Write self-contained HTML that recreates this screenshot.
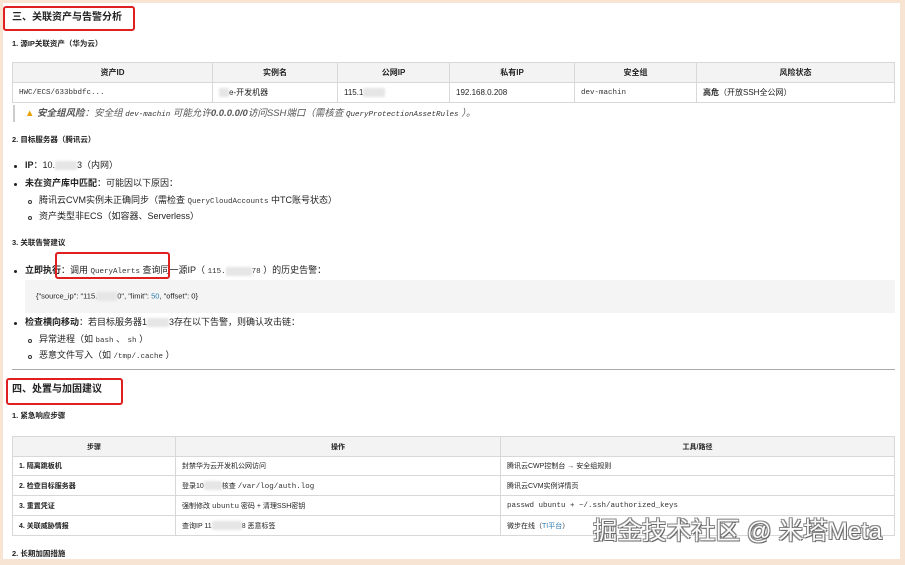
<!DOCTYPE html>
<html><head><meta charset="utf-8"><style>
*{margin:0;padding:0;box-sizing:border-box}
html,body{width:905px;height:565px;overflow:hidden;background:#f8e4d2}
#pg{position:absolute;left:3px;top:3px;width:897px;height:556px;background:#fff;font-family:"Liberation Sans","Noto Sans CJK SC",sans-serif;color:#222;font-size:9px}
.a{position:absolute;white-space:nowrap;line-height:1}
.b{font-weight:bold}
.m{font-family:"Liberation Mono","Noto Sans CJK SC",monospace;font-size:7.5px;color:#333}
.rb{position:absolute;border:2px solid #e02020;border-radius:3px}
table{position:absolute;border-collapse:collapse;font-size:8px}
td,th{border:1px solid #d8d8d8;padding:0 6px;text-align:left;font-weight:normal;white-space:nowrap}
th{background:#f3f3f3;font-weight:bold;text-align:center}
.blur{display:inline-block;background:#e6e6e6;height:9px;vertical-align:middle;filter:blur(1px)}
.dot{position:absolute;width:3px;height:3px;border-radius:50%;background:#222}
.cir{position:absolute;width:4px;height:4px;border-radius:50%;border:1px solid #333}
</style></head><body><div id="pg">
<div class="rb" style="left:0;top:3px;width:132px;height:25px"></div>
<div class="a b" style="left:9px;top:10px;font-size:10px">三、关联资产与告警分析</div>
<div class="a b" style="left:9px;top:37px;font-size:7.5px">1. 源IP关联资产（华为云）</div>
<table style="left:9px;top:59px;width:883px">
<tr style="height:20px"><th style="width:200px">资产ID</th><th style="width:125px">实例名</th><th style="width:112px">公网IP</th><th style="width:125px">私有IP</th><th style="width:122px">安全组</th><th>风险状态</th></tr>
<tr style="height:20px"><td class="m">HWC/ECS/633bbdfc...</td><td><span class="blur" style="width:10px"></span>e-开发机器</td><td>115.1<span class="blur" style="width:22px"></span></td><td>192.168.0.208</td><td class="m">dev-machin</td><td><b>高危</b>（开放SSH全公网）</td></tr>
</table>
<div style="position:absolute;left:10px;top:102px;width:2px;height:17px;background:#ccc"></div>
<div class="a" style="left:22px;top:106px;color:#555;font-style:italic;font-size:9.5px"><span style="color:#e8a000">▲</span> <b>安全组风险</b>：安全组 <span class="m">dev-machin</span> 可能允许<b>0.0.0.0/0</b>访问SSH端口（需核查 <span class="m">QueryProtectionAssetRules</span> ）。</div>
<div class="a b" style="left:9px;top:133px;font-size:7.5px">2. 目标服务器（腾讯云）</div>
<div class="dot" style="left:11px;top:162px"></div>
<div class="a" style="left:22px;top:158px"><b>IP</b>：10.<span class="blur" style="width:22px"></span>3（内网）</div>
<div class="dot" style="left:11px;top:180px"></div>
<div class="a" style="left:22px;top:176px"><b>未在资产库中匹配</b>：可能因以下原因：</div>
<div class="cir" style="left:25px;top:197px"></div>
<div class="a" style="left:36px;top:193px">腾讯云CVM实例未正确同步（需检查 <span class="m">QueryCloudAccounts</span> 中TC账号状态）</div>
<div class="cir" style="left:25px;top:213px"></div>
<div class="a" style="left:36px;top:209px">资产类型非ECS（如容器、Serverless）</div>
<div class="a b" style="left:9px;top:236px;font-size:7.5px">3. 关联告警建议</div>
<div class="dot" style="left:11px;top:267px"></div>
<div class="a" style="left:22px;top:263px"><b>立即执行</b>：调用 <span class="m">QueryAlerts</span> 查询同一源IP（ <span class="m">115.<span class="blur" style="width:26px"></span>78</span> ）的历史告警：</div>
<div class="rb" style="left:52px;top:249px;width:115px;height:27px"></div>
<div style="position:absolute;left:22px;top:277px;width:870px;height:33px;background:#f4f4f4"></div>
<div class="a" style="left:33px;top:289px;font-size:7.5px">{"source_ip": "115.<span class="blur" style="width:20px"></span>0", "limit": <span style="color:#2a7ab0">50</span>, "offset": 0}</div>
<div class="dot" style="left:11px;top:319px"></div>
<div class="a" style="left:22px;top:315px"><b>检查横向移动</b>：若目标服务器1<span class="blur" style="width:22px"></span>3存在以下告警，则确认攻击链：</div>
<div class="cir" style="left:25px;top:336px"></div>
<div class="a" style="left:36px;top:332px">异常进程（如 <span class="m">bash</span> 、 <span class="m">sh</span> ）</div>
<div class="cir" style="left:25px;top:352px"></div>
<div class="a" style="left:36px;top:348px">恶意文件写入（如 <span class="m">/tmp/.cache</span> ）</div>
<div style="position:absolute;left:9px;top:366px;width:883px;height:1px;background:#aaa"></div>
<div class="rb" style="left:3px;top:375px;width:117px;height:27px"></div>
<div class="a b" style="left:9px;top:382px;font-size:10px">四、处置与加固建议</div>
<div class="a b" style="left:9px;top:409px;font-size:7.5px">1. 紧急响应步骤</div>
<table style="left:9px;top:433px;width:883px;font-size:7px">
<tr style="height:20px"><th style="width:163px">步骤</th><th style="width:325px">操作</th><th>工具/路径</th></tr>
<tr style="height:19px"><td class="b">1. 隔离跳板机</td><td>封禁华为云开发机公网访问</td><td>腾讯云CWP控制台 → 安全组规则</td></tr>
<tr style="height:20px"><td class="b">2. 检查目标服务器</td><td>登录10<span class="blur" style="width:18px"></span>核查 <span class="m">/var/log/auth.log</span></td><td>腾讯云CVM实例详情页</td></tr>
<tr style="height:20px"><td class="b">3. 重置凭证</td><td>强制修改 <span class="m">ubuntu</span> 密码 + 清理SSH密钥</td><td class="m">passwd ubuntu + ~/.ssh/authorized_keys</td></tr>
<tr style="height:20px"><td class="b">4. 关联威胁情报</td><td>查询IP 11<span class="blur" style="width:30px"></span>8 恶意标签</td><td>微步在线（<span style="color:#2a7ab0">TI平台</span>）</td></tr>
</table>
<div class="a b" style="left:9px;top:547px;font-size:7.5px">2. 长期加固措施</div>
<div class="a" style="left:590px;top:517px;font-size:24.5px;color:#fafafa;text-shadow:1px 1px 0 #666,-1px -1px 0 #888,1px -1px 0 #888,-1px 1px 0 #888">掘金技术社区 @ 米塔Meta</div>
</div></body></html>
